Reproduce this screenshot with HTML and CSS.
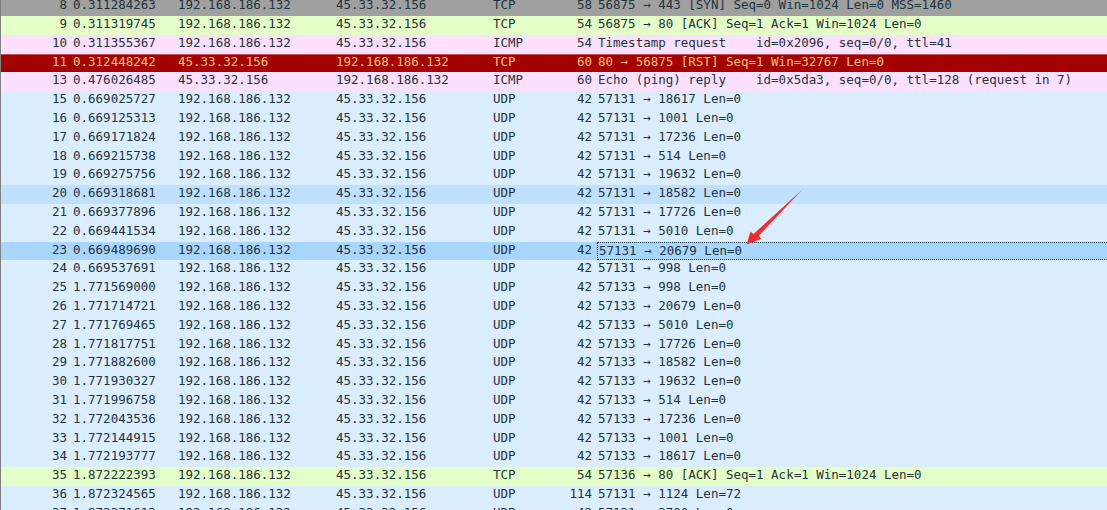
FILE: index.html
```html
<!DOCTYPE html>
<html lang="en">
<head>
<meta charset="utf-8">
<title>Packet list</title>
<link rel="stylesheet" href="styles.css">
</head>
<body>
<main class="list">
<div class="row gray"><span>8</span><span>0.311284263</span><span>192.168.186.132</span><span>45.33.32.156</span><span>TCP</span><span>58</span><span>56875 → 443 [SYN] Seq=0 Win=1024 Len=0 MSS=1460</span></div>
<div class="row green"><span>9</span><span>0.311319745</span><span>192.168.186.132</span><span>45.33.32.156</span><span>TCP</span><span>54</span><span>56875 → 80 [ACK] Seq=1 Ack=1 Win=1024 Len=0</span></div>
<div class="row pink"><span>10</span><span>0.311355367</span><span>192.168.186.132</span><span>45.33.32.156</span><span>ICMP</span><span>54</span><span>Timestamp request    id=0x2096, seq=0/0, ttl=41</span></div>
<div class="row red"><span>11</span><span>0.312448242</span><span>45.33.32.156</span><span>192.168.186.132</span><span>TCP</span><span>60</span><span>80 → 56875 [RST] Seq=1 Win=32767 Len=0</span></div>
<div class="row pink"><span>13</span><span>0.476026485</span><span>45.33.32.156</span><span>192.168.186.132</span><span>ICMP</span><span>60</span><span>Echo (ping) reply    id=0x5da3, seq=0/0, ttl=128 (request in 7)</span></div>
<div class="row"><span>15</span><span>0.669025727</span><span>192.168.186.132</span><span>45.33.32.156</span><span>UDP</span><span>42</span><span>57131 → 18617 Len=0</span></div>
<div class="row"><span>16</span><span>0.669125313</span><span>192.168.186.132</span><span>45.33.32.156</span><span>UDP</span><span>42</span><span>57131 → 1001 Len=0</span></div>
<div class="row"><span>17</span><span>0.669171824</span><span>192.168.186.132</span><span>45.33.32.156</span><span>UDP</span><span>42</span><span>57131 → 17236 Len=0</span></div>
<div class="row"><span>18</span><span>0.669215738</span><span>192.168.186.132</span><span>45.33.32.156</span><span>UDP</span><span>42</span><span>57131 → 514 Len=0</span></div>
<div class="row"><span>19</span><span>0.669275756</span><span>192.168.186.132</span><span>45.33.32.156</span><span>UDP</span><span>42</span><span>57131 → 19632 Len=0</span></div>
<div class="row related"><span>20</span><span>0.669318681</span><span>192.168.186.132</span><span>45.33.32.156</span><span>UDP</span><span>42</span><span>57131 → 18582 Len=0</span></div>
<div class="row"><span>21</span><span>0.669377896</span><span>192.168.186.132</span><span>45.33.32.156</span><span>UDP</span><span>42</span><span>57131 → 17726 Len=0</span></div>
<div class="row"><span>22</span><span>0.669441534</span><span>192.168.186.132</span><span>45.33.32.156</span><span>UDP</span><span>42</span><span>57131 → 5010 Len=0</span></div>
<div class="row selected"><span>23</span><span>0.669489690</span><span>192.168.186.132</span><span>45.33.32.156</span><span>UDP</span><span>42</span><span>57131 → 20679 Len=0</span></div>
<div class="row"><span>24</span><span>0.669537691</span><span>192.168.186.132</span><span>45.33.32.156</span><span>UDP</span><span>42</span><span>57131 → 998 Len=0</span></div>
<div class="row"><span>25</span><span>1.771569000</span><span>192.168.186.132</span><span>45.33.32.156</span><span>UDP</span><span>42</span><span>57133 → 998 Len=0</span></div>
<div class="row"><span>26</span><span>1.771714721</span><span>192.168.186.132</span><span>45.33.32.156</span><span>UDP</span><span>42</span><span>57133 → 20679 Len=0</span></div>
<div class="row"><span>27</span><span>1.771769465</span><span>192.168.186.132</span><span>45.33.32.156</span><span>UDP</span><span>42</span><span>57133 → 5010 Len=0</span></div>
<div class="row"><span>28</span><span>1.771817751</span><span>192.168.186.132</span><span>45.33.32.156</span><span>UDP</span><span>42</span><span>57133 → 17726 Len=0</span></div>
<div class="row"><span>29</span><span>1.771882600</span><span>192.168.186.132</span><span>45.33.32.156</span><span>UDP</span><span>42</span><span>57133 → 18582 Len=0</span></div>
<div class="row"><span>30</span><span>1.771930327</span><span>192.168.186.132</span><span>45.33.32.156</span><span>UDP</span><span>42</span><span>57133 → 19632 Len=0</span></div>
<div class="row"><span>31</span><span>1.771996758</span><span>192.168.186.132</span><span>45.33.32.156</span><span>UDP</span><span>42</span><span>57133 → 514 Len=0</span></div>
<div class="row"><span>32</span><span>1.772043536</span><span>192.168.186.132</span><span>45.33.32.156</span><span>UDP</span><span>42</span><span>57133 → 17236 Len=0</span></div>
<div class="row"><span>33</span><span>1.772144915</span><span>192.168.186.132</span><span>45.33.32.156</span><span>UDP</span><span>42</span><span>57133 → 1001 Len=0</span></div>
<div class="row"><span>34</span><span>1.772193777</span><span>192.168.186.132</span><span>45.33.32.156</span><span>UDP</span><span>42</span><span>57133 → 18617 Len=0</span></div>
<div class="row green"><span>35</span><span>1.872222393</span><span>192.168.186.132</span><span>45.33.32.156</span><span>TCP</span><span>54</span><span>57136 → 80 [ACK] Seq=1 Ack=1 Win=1024 Len=0</span></div>
<div class="row"><span>36</span><span>1.872324565</span><span>192.168.186.132</span><span>45.33.32.156</span><span>UDP</span><span>114</span><span>57131 → 1124 Len=72</span></div>
<div class="row"><span>37</span><span>1.872371613</span><span>192.168.186.132</span><span>45.33.32.156</span><span>UDP</span><span>42</span><span>57131 → 3700 Len=0</span></div>
<svg class="arrow" width="70" height="66" viewBox="0 0 70 66" aria-hidden="true"><path d="M62 0 L18 46.5 L20 50 L5.5 55.5 L9.5 42.5 L12.5 45 Z" fill="#f52a2a"/></svg>
</main>
</body>
</html>
```

FILE: styles.css
```css
html, body {
  margin: 0;
  height: 100%;
  overflow: hidden;
  background: #daeeff;
}

.list {
  position: relative;
  margin-top: -2.8px;
  border-left: 1px solid #808080;
  font-family: "DejaVu Sans Mono", monospace;
  font-size: 12.5px;
  color: #1f343c;
}

.row {
  display: grid;
  grid-template-columns: 66px 111px 158px 157px 60px 39px 1fr;
  height: 18.8px;
  line-height: 16.8px;
  background: #daeeff;
  white-space: pre;
}

.row span:nth-child(1),
.row span:nth-child(6) {
  text-align: right;
}

.row span:nth-child(2) {
  padding-left: 6px;
}

.row span:nth-child(7) {
  margin-left: 5px;
  padding-left: 1px;
}

.gray { background: #a0a0a0; }
.green { background: #e4ffc7; }
.pink { background: #fce0ff; }
.related { background: #c0e0ff; }
.selected { background: #a9d6ff; }

.red {
  background: #a40000;
  color: #f6c86c;
  box-shadow: inset 0 1px 0 #c9524f;
}

.selected span:nth-child(7) {
  border: 1px dotted #16324a;
  border-right: 0;
  line-height: 15px;
}

.arrow {
  position: absolute;
  left: 740px;
  top: 191.8px;
}
```
